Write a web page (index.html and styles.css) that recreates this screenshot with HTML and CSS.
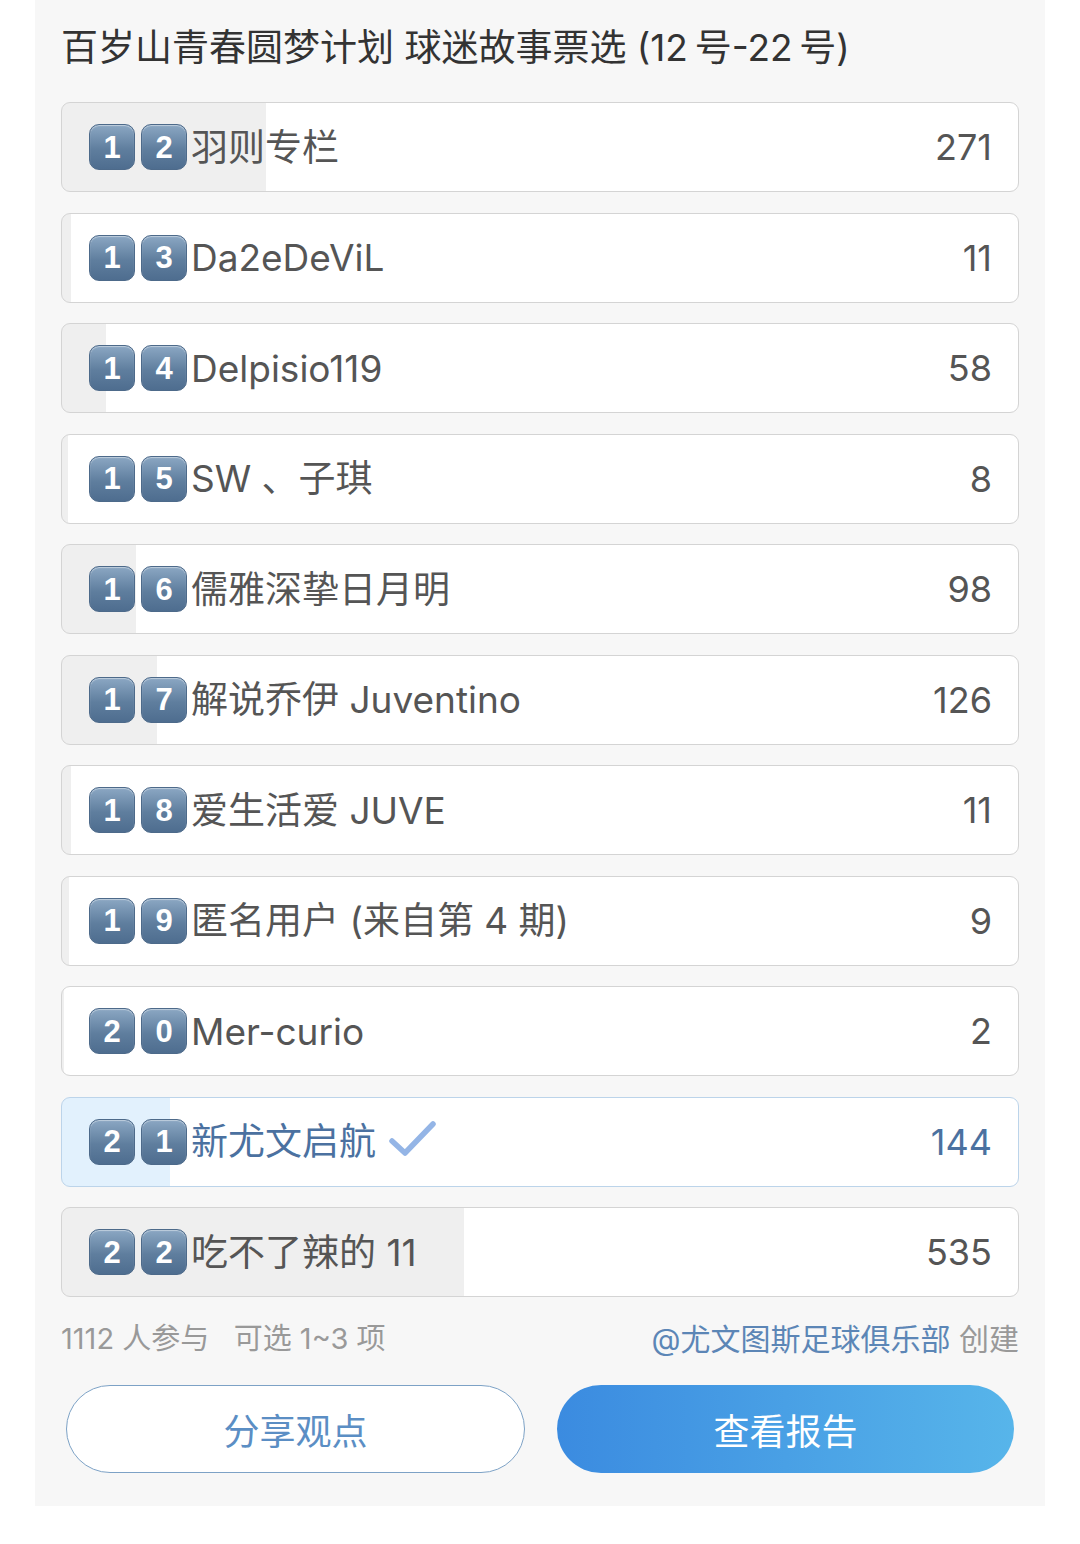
FILE: index.html
```html
<!DOCTYPE html>
<html lang="zh-CN">
<head>
    <meta charset="UTF-8">
    <meta name="viewport" content="width=device-width, initial-scale=1.0">
    <title>球迷故事票选</title>
    <link rel="stylesheet" href="styles.css">
</head>
<body>

    <div class="poll">
        <h1 class="poll-title">百岁山青春圆梦计划 球迷故事票选 (12&thinsp;号-22&thinsp;号)</h1>

        <div class="options">
            <div class="option" style="--pct: 21.3%">
                <span class="keys"><span class="key">1</span><span class="key">2</span></span>
                <span class="name">羽则专栏</span>
                <span class="count">271</span>
            </div>
            <div class="option" style="--pct: 0.9%">
                <span class="keys"><span class="key">1</span><span class="key">3</span></span>
                <span class="name">Da2eDeViL</span>
                <span class="count">11</span>
            </div>
            <div class="option" style="--pct: 4.6%">
                <span class="keys"><span class="key">1</span><span class="key">4</span></span>
                <span class="name">Delpisio119</span>
                <span class="count">58</span>
            </div>
            <div class="option" style="--pct: 0.6%">
                <span class="keys"><span class="key">1</span><span class="key">5</span></span>
                <span class="name">SW 、子琪</span>
                <span class="count">8</span>
            </div>
            <div class="option" style="--pct: 7.7%">
                <span class="keys"><span class="key">1</span><span class="key">6</span></span>
                <span class="name">儒雅深挚日月明</span>
                <span class="count">98</span>
            </div>
            <div class="option" style="--pct: 9.9%">
                <span class="keys"><span class="key">1</span><span class="key">7</span></span>
                <span class="name">解说乔伊 Juventino</span>
                <span class="count">126</span>
            </div>
            <div class="option" style="--pct: 0.9%">
                <span class="keys"><span class="key">1</span><span class="key">8</span></span>
                <span class="name">爱生活爱 JUVE</span>
                <span class="count">11</span>
            </div>
            <div class="option" style="--pct: 0.7%">
                <span class="keys"><span class="key">1</span><span class="key">9</span></span>
                <span class="name">匿名用户 (来自第 4 期)</span>
                <span class="count">9</span>
            </div>
            <div class="option" style="--pct: 0.2%">
                <span class="keys"><span class="key">2</span><span class="key">0</span></span>
                <span class="name">Mer-curio</span>
                <span class="count">2</span>
            </div>
            <div class="option voted" style="--pct: 11.3%">
                <span class="keys"><span class="key">2</span><span class="key">1</span></span>
                <span class="name">新尤文启航</span>
                <svg class="check" viewBox="0 0 48 40" width="48" height="40">
                    <path d="M4 22 L17 34 L45 5" fill="none" stroke="#94b5e6" stroke-width="5.5" stroke-linecap="round" stroke-linejoin="round"/>
                </svg>
                <span class="count">144</span>
            </div>
            <div class="option" style="--pct: 42%">
                <span class="keys"><span class="key">2</span><span class="key">2</span></span>
                <span class="name">吃不了辣的 11</span>
                <span class="count">535</span>
            </div>
        </div>

        <div class="poll-meta">
            <span>1112 人参与&nbsp;&nbsp;&nbsp;可选 1~3 项</span>
            <span class="created"><span class="creator">@尤文图斯足球俱乐部</span> 创建</span>
        </div>

        <div class="actions">
            <button class="btn-outline">分享观点</button>
            <button class="btn-primary">查看报告</button>
        </div>
    </div>

</body>
</html>
```

FILE: styles.css
```css
body {
    margin: 0;
    background-color: #ffffff;
    font-family: "Inter", "Noto Sans CJK SC", sans-serif;
    color: #555;
}

.poll {
    width: 1010px;
    margin-left: 35px;
    padding: 0 26px 33px;
    box-sizing: border-box;
    background-color: #f7f7f7;
}

.poll-title {
    margin: 0;
    height: 102px;
    padding-top: 22px;
    box-sizing: border-box;
    font-size: 37px;
    font-weight: 400;
    line-height: 52px;
    color: #333;
}

.options {
    display: flex;
    flex-direction: column;
    gap: 20.5px;
}

.option {
    display: flex;
    align-items: center;
    height: 90px;
    padding: 0 26px 0 27px;
    box-sizing: border-box;
    border: 1px solid #d4d4d4;
    border-radius: 9px;
    background: linear-gradient(to right, #efefef var(--pct), #fff var(--pct));
}

.option.voted {
    border-color: #bcd4ea;
    background: linear-gradient(to right, #e2f1fd var(--pct), #fff var(--pct));
}

.keys {
    display: flex;
    gap: 6px;
    margin-right: 4px;
}

.key {
    width: 46px;
    height: 46px;
    box-sizing: border-box;
    display: flex;
    align-items: center;
    justify-content: center;
    border-radius: 10px;
    border: 1px solid #4d6a8a;
    background: linear-gradient(#8ba7c3, #5f7e9e 55%, #4e6d8f);
    box-shadow: inset 0 1px 1px rgba(255, 255, 255, 0.45);
    color: #fff;
    font-family: "Liberation Sans", sans-serif;
    font-weight: bold;
    font-size: 31px;
    line-height: 1;
}

.name {
    font-size: 37px;
    line-height: 1;
}

.voted .name,
.voted .count {
    color: #4b71a0;
}

.check {
    margin-left: 12px;
    margin-top: -6px;
}

.count {
    margin-left: auto;
    font-size: 36px;
    line-height: 1;
}

.poll-meta {
    display: flex;
    justify-content: space-between;
    margin-top: 22px;
    font-size: 29px;
    line-height: 40px;
    color: #999;
}

.created {
    font-size: 30px;
}

.creator {
    color: #5c86b6;
}

.actions {
    display: flex;
    gap: 32px;
    padding: 26px 5px 0;
}

button {
    flex: 1;
    height: 88px;
    border-radius: 44px;
    font-family: "Noto Sans CJK SC", sans-serif;
    font-size: 36px;
    cursor: pointer;
}

.btn-outline {
    background-color: #fff;
    border: 1.5px solid #7da2c6;
    color: #5b8ec4;
}

.btn-primary {
    border: none;
    background: linear-gradient(to right, #3b8be0, #57b5ea);
    color: #fff;
}
```
